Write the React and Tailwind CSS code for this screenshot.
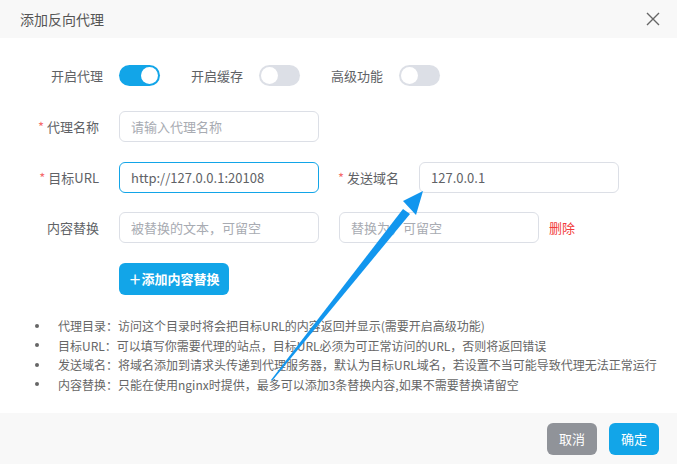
import React from "react";

function Switch({ on }) {
  return (
    <div
      className={`relative w-[41px] h-[21px] rounded-full ${on ? "bg-[#12a5e8]" : "bg-[#dcdfe6]"}`}
    >
      <div
        className={`absolute top-[2px] w-[17px] h-[17px] rounded-full bg-white ${on ? "left-[22px]" : "left-[2px]"}`}
      />
    </div>
  );
}

function Label({ req, children, w = "w-[99px]" }) {
  return (
    <div className={`${w} shrink-0 flex justify-end items-center pr-[20px] text-[13px] text-[#606266]`}>
      {req && <span className="text-[#f56c6c] mr-[3px]">*</span>}
      {children}
    </div>
  );
}

function Input({ value, placeholder, focus, w = "w-[200px]" }) {
  return (
    <div
      className={`${w} h-[31px] rounded-[6px] border flex items-center px-[11px] text-[13px] ${
        focus ? "border-[#12a5e8]" : "border-[#dcdfe6]"
      } ${value ? "text-[#606266]" : "text-[#a8abb2]"}`}
    >
      {value || placeholder}
    </div>
  );
}

export default function App() {
  const font = { fontFamily: '"Noto Sans CJK SC", "Noto Sans", sans-serif' };
  return (
    <div className="relative w-[677px] h-[464px] bg-white overflow-hidden" style={font}>
      <div className="h-[38px] bg-[#f8f8f8] flex items-center justify-between pl-[20px] pr-[16px]">
        <span className="text-[14px] text-[#555]">添加反向代理</span>
        <svg width="14" height="14" viewBox="0 0 14 14" className="mr-[1px]">
          <path d="M1 1L13 13M13 1L1 13" stroke="#666" strokeWidth="1.4" />
        </svg>
      </div>

      <div className="h-[375px] flex flex-col">
        <div className="flex items-center mt-[27px] h-[21px] pl-[51px] text-[13px] text-[#606266]">
          <span className="w-[68px]">开启代理</span>
          <Switch on />
          <span className="ml-[31px] w-[68px]">开启缓存</span>
          <Switch />
          <span className="ml-[31px] w-[68px]">高级功能</span>
          <Switch />
        </div>

        <div className="flex items-center mt-[25px]">
          <Label req w="w-[119px]">代理名称</Label>
          <Input placeholder="请输入代理名称" />
        </div>

        <div className="flex items-center mt-[20px]">
          <Label req w="w-[119px]">目标URL</Label>
          <Input value="http://127.0.0.1:20108" focus />
          <Label req w="w-[100px]">发送域名</Label>
          <Input value="127.0.0.1" />
        </div>

        <div className="flex items-center mt-[19px]">
          <Label w="w-[119px]">内容替换</Label>
          <Input placeholder="被替换的文本，可留空" />
          <div className="w-[20px]" />
          <Input placeholder="替换为，可留空" />
          <span className="ml-[10px] text-[13px] text-[#f23b3b]">删除</span>
        </div>

        <div className="mt-[20px] pl-[119px]">
          <button className="w-[110px] h-[32px] rounded-[6px] bg-[#12a5e8] text-white text-[13px] font-bold">
            ＋添加内容替换
          </button>
        </div>

        <ul className="mt-[21px] pl-[35px] text-[12px] text-[#666] leading-[19.5px]">
          {[
            "代理目录：访问这个目录时将会把目标URL的内容返回并显示(需要开启高级功能)",
            "目标URL：可以填写你需要代理的站点，目标URL必须为可正常访问的URL，否则将返回错误",
            "发送域名：将域名添加到请求头传递到代理服务器，默认为目标URL域名，若设置不当可能导致代理无法正常运行",
            "内容替换：只能在使用nginx时提供，最多可以添加3条替换内容,如果不需要替换请留空",
          ].map((t) => (
            <li key={t} className="flex items-center">
              <span className="w-[4px] h-[4px] rounded-full bg-[#666] mr-[19px] shrink-0" />
              <span className="whitespace-nowrap">{t}</span>
            </li>
          ))}
        </ul>
      </div>

      <div className="h-[51px] bg-[#f8f8f8] flex items-center justify-end pr-[18px] gap-[12px]">
        <button className="w-[50px] h-[32px] rounded-[6px] bg-[#909399] text-white text-[13px]">取消</button>
        <button className="w-[50px] h-[32px] rounded-[6px] bg-[#12a5e8] text-white text-[13px]">确定</button>
      </div>

      <svg className="absolute left-0 top-0 pointer-events-none" width="677" height="464">
        <polygon points="271,380 403,209 410,214 272,381" fill="#1296ee" />
        <polygon points="423,191 403,201 416,215" fill="#1296ee" />
      </svg>
    </div>
  );
}
